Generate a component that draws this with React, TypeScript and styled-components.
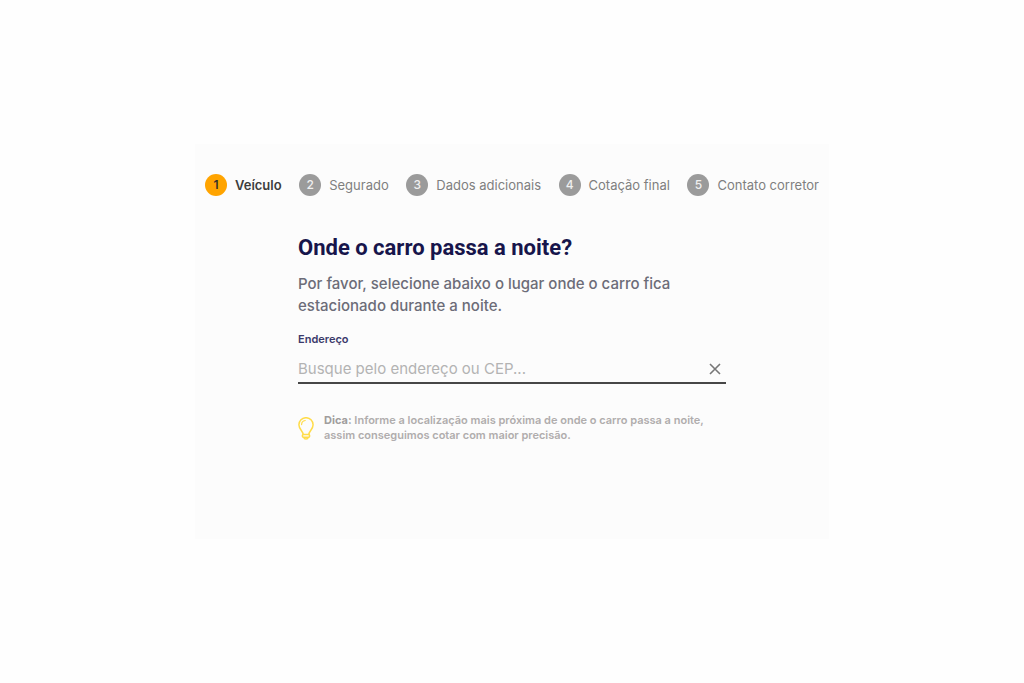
import React, { useState } from "react";
import styled, { createGlobalStyle } from "styled-components";

const GlobalStyle = createGlobalStyle`
  *, *::before, *::after { box-sizing: border-box; }
  body {
    margin: 0;
    background: #fefefe;
    font-family: Inter, "Open Sans", sans-serif;
  }
`;

const Page = styled.main`
  min-height: 100vh;
  display: flex;
  align-items: center;
  justify-content: center;
`;

const Panel = styled.section`
  width: 100%;
  max-width: 634px;
  padding: 30px 10px 96px;
  background: #fcfcfc;
`;

const Steps = styled.ol`
  display: flex;
  flex-wrap: wrap;
  justify-content: space-between;
  gap: 8px;
  margin: 0;
  padding: 0;
  list-style: none;
`;

const Step = styled.li<{ $active: boolean }>`
  display: flex;
  align-items: center;
  gap: 8px;
  font-size: 13px;
  line-height: 22px;
  font-weight: ${(p) => (p.$active ? 600 : 400)};
  color: ${(p) => (p.$active ? "#3d3d3d" : "#7f7f7f")};
  white-space: nowrap;
`;

const StepNumber = styled.span<{ $active: boolean }>`
  width: 22px;
  height: 22px;
  border-radius: 50%;
  background: ${(p) => (p.$active ? "#ffa400" : "#9b9b9b")};
  color: ${(p) => (p.$active ? "#33302a" : "#f0f0f0")};
  font-size: 12px;
  font-weight: ${(p) => (p.$active ? 600 : 500)};
  text-align: center;
`;

const Form = styled.form`
  width: 100%;
  max-width: 428px;
  margin: 37px auto 0;
`;

const Title = styled.h1`
  margin: 0;
  font-family: Roboto, sans-serif;
  font-size: 22px;
  line-height: 30px;
  font-weight: 700;
  color: #17154b;
`;

const Intro = styled.p`
  margin: 10px 0 0;
  font-size: 15px;
  line-height: 22px;
  font-weight: 500;
  color: #6c6c78;
`;

const Label = styled.label`
  display: block;
  margin-top: 14px;
  font-size: 11px;
  line-height: 16px;
  font-weight: 600;
  color: #3b3a6b;
`;

const Field = styled.div`
  display: flex;
  align-items: center;
  margin-top: 7px;
  border-bottom: 2px solid #474747;
`;

const Input = styled.input`
  flex: 1;
  min-width: 0;
  height: 28px;
  padding: 0;
  border: 0;
  outline: 0;
  background: transparent;
  font: 400 15px/22px Inter, "Open Sans", sans-serif;
  color: #474747;
  &::placeholder { color: #b3b3b3; opacity: 1; }
`;

const ClearButton = styled.button`
  display: flex;
  padding: 6px 5px 4px;
  border: 0;
  background: transparent;
  color: #777;
  cursor: pointer;
`;

const Hint = styled.div`
  display: flex;
  align-items: center;
  gap: 10px;
  margin-top: 29px;
`;

const HintText = styled.p`
  flex: 1;
  margin: 0;
  font-size: 11px;
  line-height: 15px;
  font-weight: 600;
  color: #b0adad;
  strong { font-weight: 700; color: #a09d9d; }
`;

const CloseIcon = () => (
  <svg width="12" height="12" viewBox="0 0 12 12" fill="none" stroke="currentColor" strokeWidth="1.6" aria-hidden="true">
    <path d="M1 1l10 10M11 1L1 11" />
  </svg>
);

const BulbIcon = () => (
  <svg width="16" height="23" viewBox="0 0 16 23" fill="none" stroke="#ffdc4a" strokeWidth="1.5" strokeLinecap="round" strokeLinejoin="round" aria-hidden="true">
    <path d="M5.2 17.6C5.2 14.4 .9 12.2 .9 7.8a7.1 7.1 0 0 1 14.2 0c0 4.4-4.3 6.6-4.3 9.8" />
    <rect x="4.4" y="17.6" width="7.2" height="2.6" rx="1" />
    <path d="M5.8 20.4c.2 1.2.9 1.6 2.2 1.6s2-.4 2.2-1.6" />
    <path d="M3.6 7.6c0-2.2 1.5-3.8 3.6-4.1" strokeWidth="1.2" />
  </svg>
);

const steps = ["Veículo", "Segurado", "Dados adicionais", "Cotação final", "Contato corretor"];

export default function App() {
  const [address, setAddress] = useState("");
  return (
    <Page>
      <GlobalStyle />
      <Panel>
        <Steps>
          {steps.map((name, i) => (
            <Step key={name} $active={i === 0} aria-current={i === 0 ? "step" : undefined}>
              <StepNumber $active={i === 0}>{i + 1}</StepNumber>
              {name}
            </Step>
          ))}
        </Steps>
        <Form onSubmit={(e) => e.preventDefault()}>
          <Title>Onde o carro passa a noite?</Title>
          <Intro>Por favor, selecione abaixo o lugar onde o carro fica estacionado durante a noite.</Intro>
          <Label htmlFor="address">Endereço</Label>
          <Field>
            <Input
              id="address"
              value={address}
              onChange={(e) => setAddress(e.target.value)}
              placeholder="Busque pelo endereço ou CEP..."
            />
            <ClearButton type="button" aria-label="Limpar endereço" onClick={() => setAddress("")}>
              <CloseIcon />
            </ClearButton>
          </Field>
          <Hint>
            <BulbIcon />
            <HintText>
              <strong>Dica:</strong> Informe a localização mais próxima de onde o carro passa a noite, assim conseguimos cotar com maior precisão.
            </HintText>
          </Hint>
        </Form>
      </Panel>
    </Page>
  );
}
